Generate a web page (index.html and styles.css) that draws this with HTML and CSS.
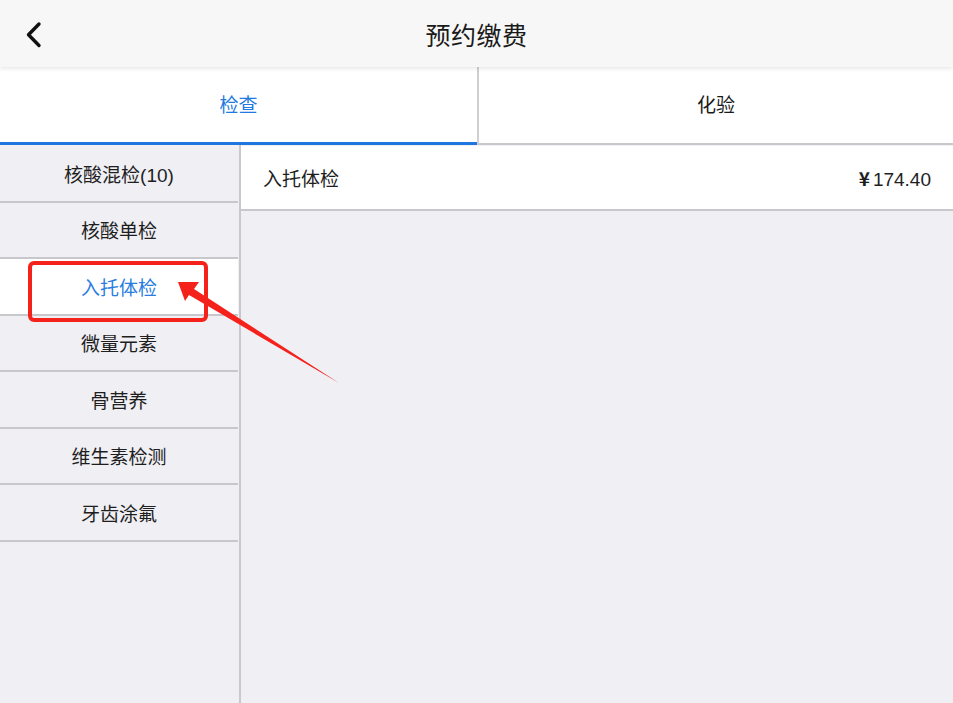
FILE: index.html
```html
<!DOCTYPE html>
<html lang="zh-CN">
<head>
<meta charset="utf-8">
<title>预约缴费</title>
<link rel="stylesheet" href="styles.css">
</head>
<body>
<div class="page">
  <header class="header">
    <svg class="back" width="24" height="30" viewBox="0 0 24 30"><path d="M17 4 L6.5 14.8 L17 25.5" fill="none" stroke="#111" stroke-width="3.4" stroke-linecap="round" stroke-linejoin="round"/></svg>
    <div class="title">预约缴费</div>
  </header>
  <nav class="tabs">
    <div class="tab active">检查</div>
    <div class="tab other">化验</div>
  </nav>
  <div class="body">
    <aside class="side">
      <div class="side-item">核酸混检(10)</div>
      <div class="side-item">核酸单检</div>
      <div class="side-item selected">入托体检</div>
      <div class="side-item">微量元素</div>
      <div class="side-item">骨营养</div>
      <div class="side-item">维生素检测</div>
      <div class="side-item">牙齿涂氟</div>
    </aside>
    <main class="main">
      <div class="row">
        <span class="row-name">入托体检</span>
        <span class="row-price"><span class="yen">¥</span>174.40</span>
      </div>
    </main>
  </div>
  <div class="mark-box"></div>
  <svg class="mark-arrow" width="953" height="703" viewBox="0 0 953 703">
    <polygon points="178,282 199,282 194,289 339,383 189,295 185,301" fill="#f5221c"/>
  </svg>
</div>
</body>
</html>
```
FILE: styles.css
```css
* { box-sizing: border-box; }
html, body { margin: 0; padding: 0; }
body {
  font-family: "Liberation Sans", "Noto Sans CJK SC", sans-serif;
  color: #222;
  background: #efeff4;
}
.page {
  position: relative;
  width: 953px;
  height: 703px;
  overflow: hidden;
  display: flex;
  flex-direction: column;
}
.header {
  position: relative;
  z-index: 2;
  height: 67px;
  flex: none;
  background: #f7f7f7;
  box-shadow: 0 1px 5px rgba(0,0,0,0.12);
  display: flex;
  align-items: center;
  justify-content: center;
}
.back {
  position: absolute;
  left: 22px;
  top: 20px;
}
.title {
  font-size: 25px;
  color: #1a1a1a;
  letter-spacing: 0.5px;
}
.tabs {
  height: 78px;
  flex: none;
  display: flex;
  background: #fff;
}
.tab {
  display: flex;
  align-items: center;
  justify-content: center;
  font-size: 19px;
  padding-bottom: 3px;
}
.tab.active {
  width: 477px;
  color: #2179e2;
  border-bottom: 3px solid #1f76e0;
}
.tab.other {
  flex: 1;
  color: #1a1a1a;
  border-left: 2px solid #cfcfd3;
  border-bottom: 2px solid #c8c7cc;
}
.body {
  flex: 1;
  display: flex;
  min-height: 0;
}
.side {
  width: 241px;
  flex: none;
  background: #efeff4;
  border-right: 2px solid #c8c7cc;
  display: flex;
  flex-direction: column;
  padding-top: 1px;
}
.side-item {
  height: 56.5px;
  border-bottom: 2px solid #c8c7cc;
  display: flex;
  align-items: center;
  justify-content: center;
  font-size: 19px;
  color: #1e1e1e;
  margin-right: 1px;
}
.side-item.selected {
  background: #fff;
  color: #2a7de0;
}
.main {
  flex: 1;
  background: #efeff4;
  padding-top: 1px;
}
.row {
  height: 65px;
  background: #fff;
  border-bottom: 2px solid #c8c7cc;
  display: flex;
  align-items: center;
  justify-content: space-between;
  padding: 0 22px 0 22px;
  font-size: 19px;
  color: #1e1e1e;
}
.yen {
  font-family: "Noto Sans CJK SC", sans-serif;
  font-weight: 700;
  margin-right: 3px;
}
.mark-box {
  position: absolute;
  left: 28px;
  top: 261px;
  width: 180px;
  height: 61px;
  border: 4px solid #f5221c;
  border-radius: 6px;
}
.mark-arrow {
  position: absolute;
  left: 0;
  top: 0;
  pointer-events: none;
}
```
